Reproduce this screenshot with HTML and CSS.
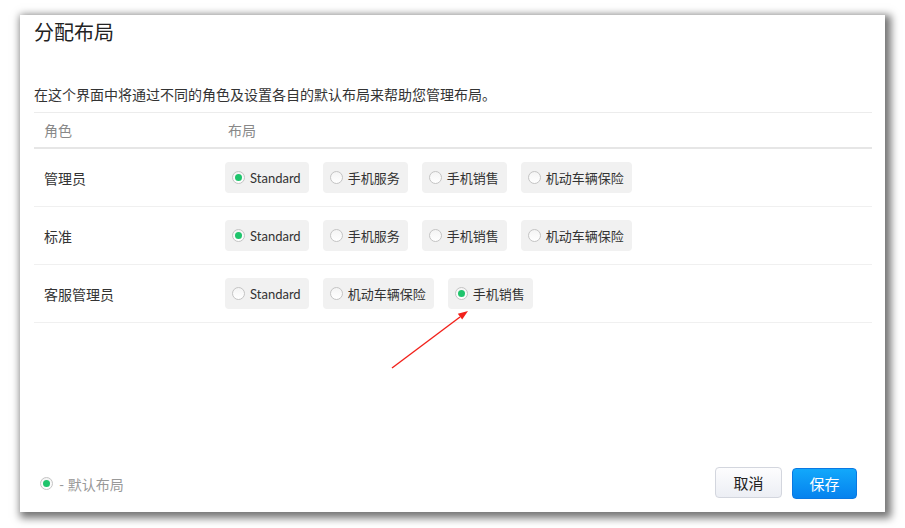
FILE: index.html
```html
<!DOCTYPE html>
<html lang="zh-CN">
<head>
  <meta charset="UTF-8">
  <title>分配布局</title>
  <link rel="stylesheet" href="styles.css">
</head>
<body>
  <div class="dialog">
    <h2 class="title">分配布局</h2>
    <p class="desc">在这个界面中将通过不同的角色及设置各自的默认布局来帮助您管理布局。</p>

    <div class="grid">
      <div class="head">
        <span class="col-role">角色</span>
        <span class="col-layout">布局</span>
      </div>
      <div class="row">
        <span class="col-role">管理员</span>
        <div class="chips">
          <label class="chip"><i class="radio on"></i>Standard</label>
          <label class="chip"><i class="radio"></i>手机服务</label>
          <label class="chip"><i class="radio"></i>手机销售</label>
          <label class="chip"><i class="radio"></i>机动车辆保险</label>
        </div>
      </div>
      <div class="row">
        <span class="col-role">标准</span>
        <div class="chips">
          <label class="chip"><i class="radio on"></i>Standard</label>
          <label class="chip"><i class="radio"></i>手机服务</label>
          <label class="chip"><i class="radio"></i>手机销售</label>
          <label class="chip"><i class="radio"></i>机动车辆保险</label>
        </div>
      </div>
      <div class="row">
        <span class="col-role">客服管理员</span>
        <div class="chips">
          <label class="chip"><i class="radio"></i>Standard</label>
          <label class="chip"><i class="radio"></i>机动车辆保险</label>
          <label class="chip"><i class="radio on"></i>手机销售</label>
        </div>
      </div>
    </div>

    <div class="footer">
      <div class="legend"><i class="radio on"></i>- 默认布局</div>
      <div class="actions">
        <button class="btn btn-cancel">取消</button>
        <button class="btn btn-save">保存</button>
      </div>
    </div>

    <!-- 标注箭头 -->
    <svg class="arrow" width="100" height="80" viewBox="0 0 100 80">
      <line x1="12" y1="68" x2="80" y2="17" stroke="#f2201a" stroke-width="1.4"/>
      <polygon points="88,11 82.2,19.6 77.8,13.8" fill="#f2201a"/>
    </svg>
  </div>
</body>
</html>
```

FILE: styles.css
```css
* {
  padding: 0;
  margin: 0;
  box-sizing: border-box;
}
html,
body {
  height: 528px;
}
body {
  background: #fff;
  font-family: Lato, "Noto Sans CJK SC", sans-serif;
  color: #333;
  padding: 15px 0 16px 20px;
}
.dialog {
  position: relative;
  width: 865px;
  height: 497px;
  padding: 3px 13px 13px 14px;
  background: #fff;
  box-shadow: 3px 3px 8px 3px rgba(0, 0, 0, .55);
  display: flex;
  flex-direction: column;
}
.title {
  font-size: 20px;
  font-weight: normal;
  line-height: 28px;
  color: #222;
}
.desc {
  margin-top: 39px;
  font-size: 14px;
  line-height: 20px;
  color: #333;
}
.grid {
  margin-top: 7px;
  border-top: 1px solid #ececec;
}
.head,
.row {
  display: flex;
  align-items: center;
}
.head {
  height: 36px;
  border-bottom: 2px solid #e6e6e6;
  font-size: 14px;
  color: #888;
}
.row {
  height: 58px;
  border-bottom: 1px solid #f0f0f0;
  font-size: 14px;
}
.col-role {
  width: 191px;
  padding-left: 10px;
  flex-shrink: 0;
}
.col-layout {
  padding-left: 3px;
}
.chips {
  display: flex;
  gap: 14px;
}
.chip {
  display: flex;
  align-items: center;
  height: 31px;
  padding: 0 8px 0 7px;
  background: #f1f1f1;
  border-radius: 4px;
  font-size: 13px;
  color: #333;
}
.radio {
  display: inline-block;
  position: relative;
  width: 13px;
  height: 13px;
  margin-right: 5px;
  border: 1px solid #c4c4c4;
  border-radius: 50%;
  background: linear-gradient(#f4f4f4, #fff);
}
.radio.on::after {
  content: '';
  position: absolute;
  left: 2px;
  top: 2px;
  width: 7px;
  height: 7px;
  border-radius: 50%;
  background: #1fc46c;
}
.footer {
  margin-top: auto;
  display: flex;
  align-items: center;
  justify-content: space-between;
  padding: 0 15px 0 6px;
}
.legend {
  display: flex;
  align-items: center;
  font-size: 14px;
  color: #999;
}
.legend .radio {
  margin-right: 6px;
}
.actions {
  display: flex;
  align-items: center;
  gap: 10px;
}
.btn {
  height: 31px;
  border-radius: 4px;
  font-family: inherit;
  font-size: 15px;
  cursor: pointer;
}
.btn-cancel {
  width: 67px;
  margin-top: -3px;
  border: 1px solid #d3d6de;
  background: linear-gradient(#fdfdfe, #eceef4);
  color: #222;
}
.btn-save {
  width: 65px;
  border: 1px solid #0a78e2;
  background: linear-gradient(#12a8fb, #0682ee);
  color: #fff;
}
.arrow {
  position: absolute;
  left: 360px;
  top: 285px;
}
```
